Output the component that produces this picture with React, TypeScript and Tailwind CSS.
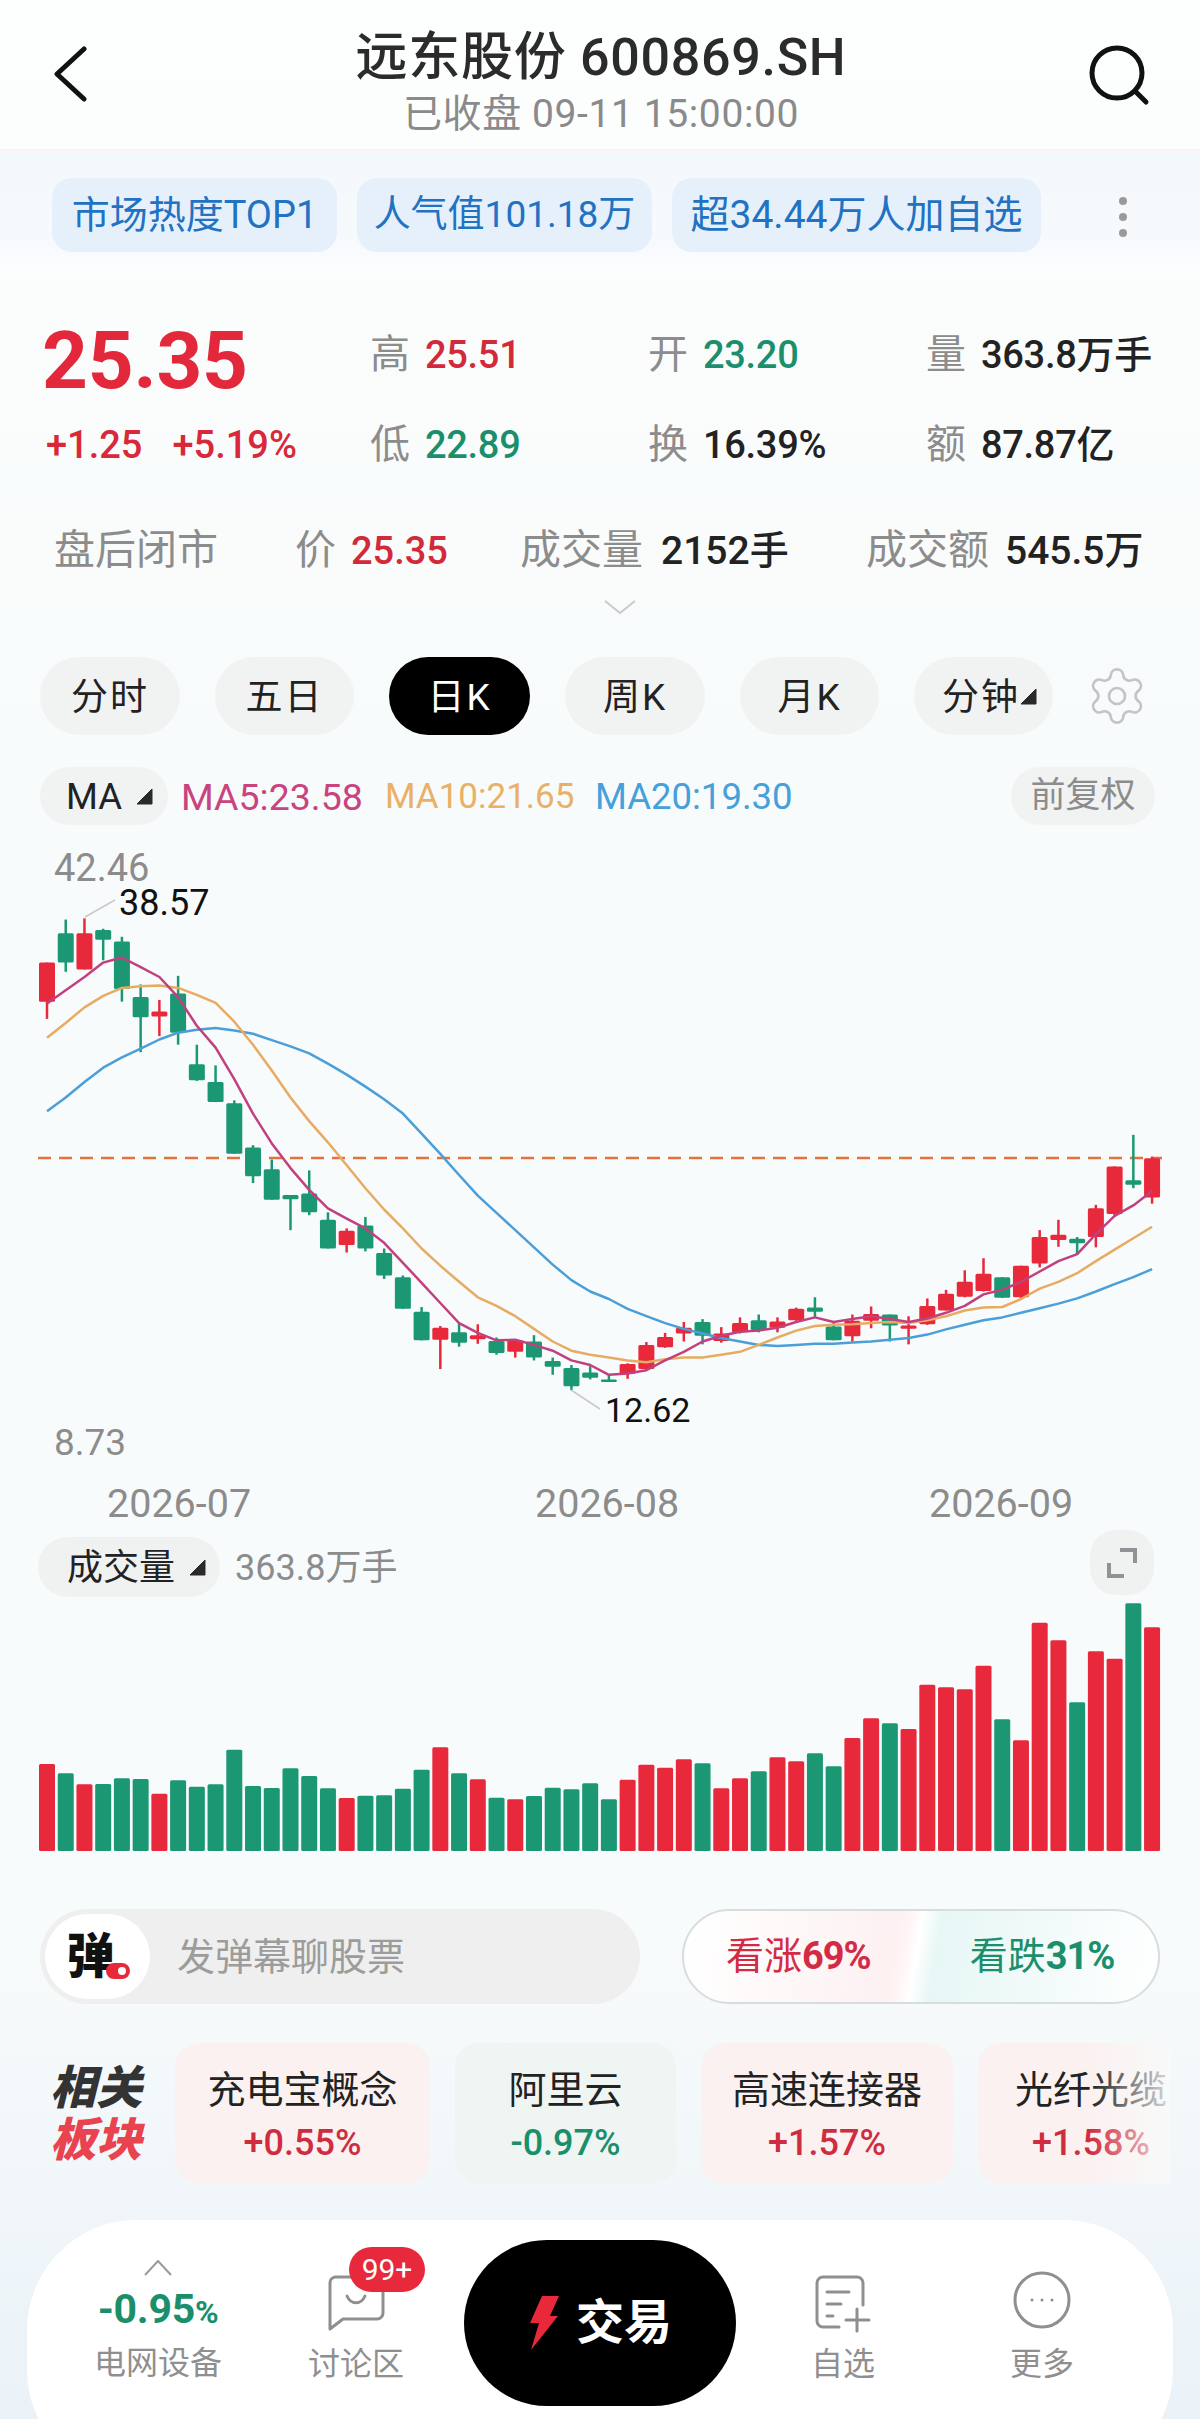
import React from "react";
import { Settings } from "lucide-react";

const RED = "#e8293c";
const GREEN = "#1b9873";
const xAt = (i: number) => 47 + i * 18.73;
const yAt = (z: number) => 640 + z / 1.742;

// wickTop, bodyTop, bodyBottom, wickBottom, up?
const candles: [number, number, number, number, number][] = [
  [562, 562, 630, 660, 1], [487, 511, 562, 578, 0], [485, 511, 574, 574, 1], [503, 505, 522, 558, 0], [517, 525, 608, 630, 0],
  [600, 622, 657, 718, 0], [627, 647, 656, 690, 1], [585, 616, 684, 705, 0], [705, 739, 767, 768, 0], [741, 770, 805, 805, 0],
  [802, 807, 895, 895, 0], [880, 884, 934, 946, 0], [905, 922, 975, 975, 0], [967, 967, 974, 1028, 0], [924, 964, 997, 1002, 0],
  [997, 1010, 1060, 1060, 0], [1025, 1029, 1054, 1067, 1], [1005, 1020, 1060, 1065, 0], [1060, 1068, 1107, 1113, 0], [1107, 1110, 1165, 1165, 0],
  [1162, 1170, 1220, 1220, 0], [1195, 1198, 1219, 1270, 1], [1190, 1206, 1224, 1231, 0], [1192, 1211, 1218, 1226, 1], [1215, 1221, 1242, 1245, 0],
  [1218, 1220, 1240, 1250, 1], [1211, 1222, 1250, 1255, 0], [1250, 1256, 1266, 1280, 0], [1263, 1268, 1300, 1307, 0], [1265, 1276, 1285, 1288, 0],
  [1280, 1288, 1292, 1292, 0], [1260, 1261, 1278, 1287, 1], [1223, 1228, 1270, 1272, 1], [1207, 1214, 1232, 1233, 1], [1188, 1198, 1208, 1222, 1],
  [1183, 1188, 1212, 1227, 0], [1197, 1208, 1221, 1224, 1], [1180, 1190, 1206, 1208, 1], [1175, 1185, 1202, 1206, 0], [1180, 1187, 1198, 1206, 1],
  [1163, 1165, 1185, 1186, 1], [1145, 1163, 1170, 1180, 0], [1190, 1196, 1220, 1220, 0], [1175, 1186, 1213, 1222, 1], [1161, 1174, 1186, 1199, 1],
  [1175, 1175, 1194, 1222, 0], [1178, 1194, 1200, 1227, 1], [1147, 1160, 1192, 1193, 1], [1132, 1139, 1168, 1168, 1], [1098, 1118, 1144, 1145, 1],
  [1077, 1104, 1134, 1135, 1], [1110, 1110, 1146, 1146, 0], [1090, 1090, 1145, 1146, 1], [1028, 1040, 1086, 1093, 1], [1010, 1036, 1045, 1057, 1],
  [1040, 1043, 1051, 1070, 0], [984, 990, 1040, 1058, 1], [917, 917, 1000, 1005, 1], [862, 941, 949, 955, 0], [900, 903, 971, 982, 1],
];

const ma5 = [633, 610, 587, 562, 553, 570, 587, 622, 672, 710, 765, 825, 877, 920, 958, 990, 1008, 1025, 1050, 1085, 1120, 1155, 1190, 1207, 1220, 1219, 1228, 1238, 1255, 1263,
  1280, 1278, 1272, 1255, 1240, 1222, 1212, 1205, 1203, 1198, 1188, 1180, 1188, 1183, 1178, 1183, 1188, 1182, 1172, 1160, 1140, 1132, 1118, 1100, 1082, 1070, 1035, 1003, 985, 960];
const ma10 = [693, 667, 640, 620, 606, 603, 602, 606, 618, 632, 665, 705, 750, 797, 838, 875, 915, 955, 992, 1025, 1060, 1090, 1118, 1145, 1160, 1178, 1200, 1222, 1238, 1245,
  1250, 1255, 1258, 1253, 1250, 1250, 1245, 1240, 1228, 1215, 1203, 1195, 1193, 1192, 1190, 1188, 1190, 1185, 1178, 1168, 1163, 1162, 1148, 1130, 1118, 1103, 1082, 1062, 1042, 1022];
const ma20 = [821, 797, 770, 745, 727, 712, 696, 684, 679, 676, 680, 686, 697, 708, 720, 738, 757, 778, 800, 825, 860, 895, 932, 968, 998, 1028, 1058, 1088, 1115, 1135,
  1148, 1165, 1178, 1190, 1200, 1208, 1216, 1222, 1228, 1230, 1228, 1226, 1226, 1224, 1222, 1219, 1216, 1210, 1201, 1193, 1185, 1180, 1172, 1164, 1156, 1147, 1135, 1122, 1110, 1096];

const volTops = [732, 760, 793, 792, 775, 777, 821, 781, 800, 793, 689, 798, 804, 745, 768, 805, 834, 827, 826, 806, 749, 682, 760, 778, 833, 838, 828, 803, 808, 790,
  838, 779, 734, 743, 718, 730, 805, 775, 754, 712, 724, 700, 739, 654, 595, 610, 627, 494, 502, 508, 437, 598, 661, 308, 361, 547, 394, 416, 250, 322];

const pts = (a: number[]) => a.map((v, i) => `${xAt(i).toFixed(1)},${yAt(v).toFixed(1)}`).join(" ");

function Tri() {
  return (
    <svg width="17" height="17" viewBox="0 0 17 17" className="shrink-0">
      <path d="M16 1 L16 16 L1 16 Z" fill="#2a2a2a" stroke="#2a2a2a" strokeLinejoin="round" />
    </svg>
  );
}

function Stat({ label, value, color }: { label: string; value: string; color: string }) {
  return (
    <div className="h-[90px] flex items-center gap-[15px] whitespace-nowrap">
      <span className="text-[40px] text-[#8c8c8c]">{label}</span>
      <span className="text-[38px] font-medium tracking-[-0.3px]" style={{ color }}>{value}</span>
    </div>
  );
}

function Tab({ label, w, active, tri }: { label: string; w: string; active?: boolean; tri?: boolean }) {
  return (
    <div className={`h-[78px] ${w} rounded-full flex items-center justify-center tracking-[2px] text-[37px] ${active ? "bg-black text-white" : "bg-[#f1f3f3] text-[#222222]"}`}>
      <span className={`pt-[3px] ${tri ? "ml-[12px]" : ""}`}>{label}</span>
      {tri && <Tri />}
    </div>
  );
}

function Card({ name, pct, w, up, color }: { name: string; pct: string; w: string; up: boolean; color: string }) {
  return (
    <div className={`${w} h-[141px] shrink-0 rounded-[24px] flex flex-col items-center pt-[22px] ${up ? "bg-[#fbf1f1]" : "bg-[#eef5f3]"}`}>
      <span className="text-[38px] leading-[50px] text-[#222222] whitespace-nowrap">{name}</span>
      <span className="text-[36px] leading-[50px] mt-[3px] font-medium" style={{ color }}>{pct}</span>
    </div>
  );
}

export default function App() {
  return (
    <div className="w-[1200px] h-[2419px] overflow-hidden flex flex-col bg-[linear-gradient(180deg,#fdfefe_0%,#f8fbfb_30%,#f8fbfb_80%,#eaf2f8_100%)] font-[Roboto,'Noto_Sans_CJK_SC',sans-serif]">
      {/* header */}
      <div className="h-[151px] shrink-0 px-[50px] flex items-center justify-between border-b-2 border-[#fbf3f3]">
        <div className="w-[62px] -mt-[2px]">
          <svg width="40" height="56" viewBox="0 0 40 56" fill="none" stroke="#111111" strokeWidth="5" strokeLinecap="round" strokeLinejoin="round" className="block">
            <path d="M34 3 L7 28 L34 53" />
          </svg>
        </div>
        <div className="flex flex-col items-center pt-[14px] pl-[2px]">
          <div className="text-[52px] leading-[64px] font-medium text-[#2b2b2b] tracking-[0.7px]">远东股份 600869.SH</div>
          <div className="text-[39px] leading-[46px] text-[#8a8a8a] tracking-[0.6px] mt-[1px]">已收盘 09-11 15:00:00</div>
        </div>
        <svg width="62" height="62" viewBox="0 0 62 62" fill="none" stroke="#111111" strokeWidth="5" strokeLinecap="round">
          <circle cx="29" cy="29" r="25" />
          <path d="M47 47 L58 58" />
        </svg>
      </div>

      {/* tags */}
      <div className="h-[129px] shrink-0 pl-[52px] pt-[27px] flex items-start gap-[20px] bg-[linear-gradient(180deg,#f3f8fc_0%,#f7fafd_70%,#fdfefe_100%)]">
        <div className="w-[285px] h-[74px] rounded-[20px] bg-[#e6f0fb] text-[#2272c3] text-[38px] flex items-center justify-center whitespace-nowrap">市场热度TOP1</div>
        <div className="w-[295px] h-[74px] rounded-[20px] bg-[#e6f0fb] text-[#2272c3] text-[37px] flex items-center justify-center whitespace-nowrap">人气值101.18万</div>
        <div className="w-[369px] h-[74px] rounded-[20px] bg-[#e6f0fb] text-[#2272c3] text-[39px] flex items-center justify-center whitespace-nowrap">超34.44万人加自选</div>
        <div className="ml-[58px] mt-[19px] flex flex-col gap-[8px]">
          <span className="w-[8px] h-[8px] rounded-full bg-[#9a9a9a]" />
          <span className="w-[8px] h-[8px] rounded-full bg-[#9a9a9a]" />
          <span className="w-[8px] h-[8px] rounded-full bg-[#9a9a9a]" />
        </div>
      </div>

      {/* quote */}
      <div className="shrink-0 pt-[30px] pl-[42px] flex">
        <div className="w-[328px]">
          <div className="h-[90px] flex items-center text-[80px] leading-none font-bold text-[#e2283a] tracking-[-0.2px] pt-[12px]">25.35</div>
          <div className="h-[90px] flex items-center gap-[30px] pl-[4px] text-[38px] font-medium text-[#d8283a]">
            <span>+1.25</span>
            <span>+5.19%</span>
          </div>
        </div>
        <div className="w-[278px]">
          <Stat label="高" value="25.51" color="#d12a3a" />
          <Stat label="低" value="22.89" color="#1b8f6c" />
        </div>
        <div className="w-[278px]">
          <Stat label="开" value="23.20" color="#1b8f6c" />
          <Stat label="换" value="16.39%" color="#222222" />
        </div>
        <div>
          <Stat label="量" value="363.8万手" color="#222222" />
          <Stat label="额" value="87.87亿" color="#222222" />
        </div>
      </div>

      {/* after hours */}
      <div className="shrink-0 mt-[26px] h-[70px] pl-[54px] flex items-center text-[41px] text-[#8c8c8c] whitespace-nowrap">
        <div className="w-[241px]">盘后闭市</div>
        <div className="w-[225px] flex items-center gap-[15px]">
          <span>价</span>
          <span className="text-[38px] font-medium text-[#d12a3a]">25.35</span>
        </div>
        <div className="w-[346px] flex items-center gap-[18px]">
          <span>成交量</span>
          <span className="text-[39px] font-medium text-[#222222]">2152手</span>
        </div>
        <div className="flex items-center gap-[16px]">
          <span>成交额</span>
          <span className="text-[39px] font-medium text-[#222222]">545.5万</span>
        </div>
      </div>
      <div className="shrink-0 mt-[14px] pl-[604px] h-[14px]">
        <svg width="32" height="14" viewBox="0 0 32 14" fill="none" stroke="#c9c9c9" strokeWidth="2">
          <path d="M1 1 L16 13 L31 1" />
        </svg>
      </div>

      {/* period tabs */}
      <div className="shrink-0 mt-[43px] pl-[40px] flex items-center gap-[35px]">
        <Tab label="分时" w="w-[140px]" />
        <Tab label="五日" w="w-[139px]" />
        <Tab label="日K" w="w-[141px]" active />
        <Tab label="周K" w="w-[140px]" />
        <Tab label="月K" w="w-[139px]" />
        <Tab label="分钟" w="w-[139px]" tri />
        <Settings size={64} strokeWidth={1} color="#c4c4c4" className="-ml-[3px]" />
      </div>

      {/* MA row */}
      <div className="shrink-0 mt-[32px] h-[58px] pl-[40px] pr-[45px] flex items-center text-[36.5px] whitespace-nowrap">
        <div className="w-[128px] h-[58px] rounded-full bg-[#f1f3f3] flex items-center pl-[26px] gap-[14px] text-[#222222]">
          <span className="pt-[2px]">MA</span>
          <Tri />
        </div>
        <span className="ml-[13px] w-[204px] text-[37.5px] pt-[2px] text-[#c8447f]">MA5:23.58</span>
        <span className="w-[210px] text-[35px] pt-[2px] text-[#e9b066]">MA10:21.65</span>
        <span className="pt-[2px] text-[#46a0da]">MA20:19.30</span>
        <div className="ml-auto w-[144px] h-[58px] rounded-full bg-[#f1f3f3] flex items-center justify-center text-[#8c8c8c] text-[35px]">前复权</div>
      </div>

      {/* K-line chart */}
      <svg width="1200" height="705" viewBox="0 825 1200 705" className="block shrink-0">
        <line x1="38" y1="1158" x2="1162" y2="1158" stroke="#e4713c" strokeWidth="2.5" strokeDasharray="13 8" />
        {candles.map(([wt, bt, bb, wb, up], i) => {
          const c = up ? RED : GREEN;
          const x = xAt(i);
          return (
            <g key={i}>
              <line x1={x} x2={x} y1={yAt(wt)} y2={yAt(wb)} stroke={c} strokeWidth="2.5" />
              <rect x={x - 8} y={yAt(bt)} width="16" height={Math.max(yAt(bb) - yAt(bt), 2.5)} rx="1.5" fill={c} />
            </g>
          );
        })}
        <polyline points={pts(ma20)} fill="none" stroke="#4a9fd8" strokeWidth="2.5" strokeLinejoin="round" />
        <polyline points={pts(ma10)} fill="none" stroke="#e8ab62" strokeWidth="2.5" strokeLinejoin="round" />
        <polyline points={pts(ma5)} fill="none" stroke="#c2407f" strokeWidth="2.5" strokeLinejoin="round" />
        <line x1="85" y1="917" x2="115" y2="900" stroke="#c9c9c9" strokeWidth="1.5" />
        <line x1="571" y1="1390" x2="600" y2="1409" stroke="#c9c9c9" strokeWidth="1.5" />
        <text x="54" y="881" fontSize="38" fill="#8c8c8c">42.46</text>
        <text x="119" y="915" fontSize="36" fill="#111111">38.57</text>
        <text x="54" y="1455" fontSize="37" fill="#8c8c8c">8.73</text>
        <text x="605" y="1422" fontSize="34" fill="#111111">12.62</text>
        <text x="107" y="1517" fontSize="39.5" fill="#8c8c8c">2026-07</text>
        <text x="535" y="1517" fontSize="39.5" fill="#8c8c8c">2026-08</text>
        <text x="929" y="1517" fontSize="39.5" fill="#8c8c8c">2026-09</text>
      </svg>

      {/* volume head */}
      <div className="shrink-0 h-[70px] pl-[38px] pr-[46px] flex items-start">
        <div className="mt-[7px] w-[182px] h-[60px] rounded-full bg-[#f0f2f2] flex items-center pl-[29px] gap-[14px] text-[36px] text-[#222222] whitespace-nowrap">
          <span className="pt-[2px]">成交量</span>
          <Tri />
        </div>
        <span className="ml-[15px] mt-[15px] text-[36px] leading-[46px] text-[#8c8c8c] whitespace-nowrap">363.8万手</span>
        <div className="ml-auto w-[64px] h-[65px] rounded-[26px] bg-[#f0f2f2] flex items-center justify-center">
          <svg width="30" height="30" viewBox="0 0 30 30" fill="none" stroke="#8f9395" strokeWidth="4">
            <path d="M13 2 H28 V15 M17 28 H2 V15" />
          </svg>
        </div>
      </div>

      {/* volume bars */}
      <svg width="1200" height="255" viewBox="0 1600 1200 255" className="block shrink-0">
        {volTops.map((t, i) => {
          const top = 1520 + t / 3;
          return <rect key={i} x={xAt(i) - 8} y={top} width="16" height={1851 - top} rx="1.5" fill={candles[i][4] ? RED : GREEN} />;
        })}
      </svg>

      {/* barrage + vote */}
      <div className="shrink-0 mt-[54px] h-[95px] pl-[40px] flex items-center">
        <div className="w-[600px] h-[95px] rounded-full bg-[#efefef] flex items-center pl-[5px]">
          <div className="relative w-[105px] h-[85px] rounded-full bg-white flex items-center justify-center pr-[14px] text-[48px] font-black text-[#111111]">
            弹
            <span className="absolute right-[20px] bottom-[20px] w-[24px] h-[16px] rounded-full bg-[#e8293c] border-[4px] border-[#e8293c]">
              <span className="block ml-auto w-[8px] h-[8px] rounded-full bg-white" />
            </span>
          </div>
          <span className="ml-[27px] text-[38px] text-[#9c9c9c] pt-[2px]">发弹幕聊股票</span>
        </div>
        <div className="ml-[42px] w-[478px] h-[95px] rounded-full border-2 border-[#d6dedd] flex items-center bg-[linear-gradient(100deg,#ffffff_0%,#fdf1f2_44%,#fff3f4_46%,#ffffff_49%,#e6f7f5_53%,#ffffff_100%)] text-[38px] whitespace-nowrap">
          <span className="ml-[42px] text-[#d42b45]">看涨<span className="font-bold tracking-[-1px]">69%</span></span>
          <span className="ml-[99px] text-[#1b8f6c]">看跌<span className="font-bold tracking-[-1px]">31%</span></span>
        </div>
      </div>

      {/* related sectors */}
      <div className="relative shrink-0 mt-[39px] h-[141px] w-[1170px] overflow-hidden pl-[50px] flex items-center">
        <div className="w-[125px] shrink-0 text-[46px] leading-[52px] font-black italic">
          <div className="text-[#333333]">相关</div>
          <div className="text-[#e8434f]">板块</div>
        </div>
        <div className="flex gap-[25px]">
          <Card name="充电宝概念" pct="+0.55%" w="w-[255px]" up color="#cf2d3f" />
          <Card name="阿里云" pct="-0.97%" w="w-[221px]" up={false} color="#1b8f6c" />
          <Card name="高速连接器" pct="+1.57%" w="w-[252px]" up color="#cf2d3f" />
          <Card name="光纤光缆" pct="+1.58%" w="w-[226px]" up color="#cf2d3f" />
        </div>
        <div className="absolute right-0 top-0 w-[80px] h-[141px] bg-[linear-gradient(90deg,rgba(248,251,251,0),rgba(248,251,251,0.85))]" />
      </div>

      {/* bottom bar */}
      <div className="shrink-0 mt-[36px] mx-[27px] h-[260px] rounded-[110px] bg-white flex items-start pl-[33px] pt-[20px]">
        <div className="w-[196px] flex flex-col items-center">
          <svg width="30" height="16" viewBox="0 0 30 16" fill="none" stroke="#9a9a9a" strokeWidth="2" className="mt-[20px]">
            <path d="M2 15 L15 1 L28 15" />
          </svg>
          <div className="mt-[8px] leading-[50px] text-[#1b8f6c] font-bold text-[41px] tracking-[-0.3px]">-0.95<span className="text-[32px]">%</span></div>
          <div className="mt-[4px] text-[32px] leading-[44px] text-[#8f8f8f]">电网设备</div>
        </div>
        <div className="w-[200px] flex flex-col items-center">
          <div className="relative mt-[35px] w-[58px] h-[56px]">
            <svg width="58" height="56" viewBox="0 0 58 56" fill="none" stroke="#8f8f8f" strokeWidth="3" strokeLinejoin="round">
              <path d="M8 2 H50 a6 6 0 0 1 6 6 V38 a6 6 0 0 1 -6 6 H16 L3 54 V8 a6 6 0 0 1 5 -6 Z" />
              <path d="M20 21 C24 30 34 30 38 21" strokeLinecap="round" />
            </svg>
            <div className="absolute left-[22px] -top-[28px] w-[76px] h-[45px] rounded-full bg-[#e8293c] text-white text-[30px] flex items-center justify-center">99+</div>
          </div>
          <div className="mt-[11px] text-[32px] leading-[44px] text-[#8f8f8f]">讨论区</div>
        </div>
        <div className="ml-[8px] w-[272px] h-[166px] rounded-[83px] bg-black flex items-center justify-center gap-[16px]">
          <svg width="32" height="54" viewBox="0 0 32 54">
            <path d="M14 0 H31 L22 20 H30 L3 54 L11 27 H2 Z" fill="#e8293c" />
          </svg>
          <span className="text-[48px] font-bold text-white">交易</span>
        </div>
        <div className="ml-[8px] w-[198px] flex flex-col items-center">
          <svg width="60" height="58" viewBox="0 0 60 58" fill="none" stroke="#8f8f8f" strokeWidth="3" strokeLinecap="round" className="mt-[35px]">
            <path d="M26 52 H10 a6 6 0 0 1 -6 -6 V8 a6 6 0 0 1 6 -6 H44 a6 6 0 0 1 6 6 V30" />
            <path d="M14 17 H36 M14 29 H28 M14 41 H20 M44 34 V56 M33 45 H56" />
          </svg>
          <div className="mt-[9px] text-[32px] leading-[44px] text-[#8f8f8f]">自选</div>
        </div>
        <div className="w-[200px] flex flex-col items-center">
          <svg width="60" height="60" viewBox="0 0 60 60" fill="none" stroke="#8f8f8f" strokeWidth="3" className="mt-[30px]">
            <circle cx="30" cy="30" r="27" />
            <circle cx="20" cy="30" r="1.5" fill="#8f8f8f" stroke="none" />
            <circle cx="30" cy="30" r="1.5" fill="#8f8f8f" stroke="none" />
            <circle cx="40" cy="30" r="1.5" fill="#8f8f8f" stroke="none" />
          </svg>
          <div className="mt-[12px] text-[32px] leading-[44px] text-[#8f8f8f]">更多</div>
        </div>
      </div>
    </div>
  );
}
